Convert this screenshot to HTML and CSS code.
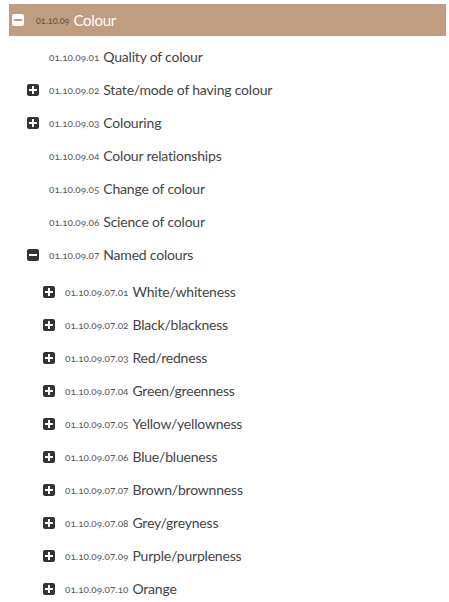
FILE: index.html
```html
<!DOCTYPE html>
<html>
<head>
<meta charset="utf-8">
<link rel="stylesheet" href="styles.css">
</head>
<body>
<div class="tree">
  <div class="head">
    <span class="tog tog-light minus"></span>
    <span class="code">01.10.09</span>
    <span class="label">Colour</span>
  </div>
  <ul class="lvl1">
    <li class="row"><span class="tog none"></span><span class="code">01.10.09.01</span><span class="label">Quality of colour</span></li>
    <li class="row"><span class="tog plus"></span><span class="code">01.10.09.02</span><span class="label">State/mode of having colour</span></li>
    <li class="row"><span class="tog plus"></span><span class="code">01.10.09.03</span><span class="label">Colouring</span></li>
    <li class="row"><span class="tog none"></span><span class="code">01.10.09.04</span><span class="label">Colour relationships</span></li>
    <li class="row"><span class="tog none"></span><span class="code">01.10.09.05</span><span class="label">Change of colour</span></li>
    <li class="row"><span class="tog none"></span><span class="code">01.10.09.06</span><span class="label">Science of colour</span></li>
    <li class="open">
      <div class="row"><span class="tog minus"></span><span class="code">01.10.09.07</span><span class="label">Named colours</span></div>
      <ul class="lvl2">
        <li class="row"><span class="tog plus"></span><span class="code">01.10.09.07.01</span><span class="label">White/whiteness</span></li>
        <li class="row"><span class="tog plus"></span><span class="code">01.10.09.07.02</span><span class="label">Black/blackness</span></li>
        <li class="row"><span class="tog plus"></span><span class="code">01.10.09.07.03</span><span class="label">Red/redness</span></li>
        <li class="row"><span class="tog plus"></span><span class="code">01.10.09.07.04</span><span class="label">Green/greenness</span></li>
        <li class="row"><span class="tog plus"></span><span class="code">01.10.09.07.05</span><span class="label">Yellow/yellowness</span></li>
        <li class="row"><span class="tog plus"></span><span class="code">01.10.09.07.06</span><span class="label">Blue/blueness</span></li>
        <li class="row"><span class="tog plus"></span><span class="code">01.10.09.07.07</span><span class="label">Brown/brownness</span></li>
        <li class="row"><span class="tog plus"></span><span class="code">01.10.09.07.08</span><span class="label">Grey/greyness</span></li>
        <li class="row"><span class="tog plus"></span><span class="code">01.10.09.07.09</span><span class="label">Purple/purpleness</span></li>
        <li class="row"><span class="tog plus"></span><span class="code">01.10.09.07.10</span><span class="label">Orange</span></li>
      </ul>
    </li>
  </ul>
</div>
</body>
</html>
```
FILE: styles.css
```css
html, body {
  margin: 0;
  padding: 0;
  background: #fff;
}
body {
  font-family: Lato, "Open Sans", sans-serif;
  color: #444;
  overflow: hidden;
}
.tree {
  margin: 4px 3px 0 9px;
}
.head {
  height: 32px;
  background: #c09d7e;
  display: flex;
  align-items: center;
  padding-left: 3px;
  color: #fff;
}
.head .code {
  color: #5e5247;
  margin-left: 12px;
  font-size: 9px;
  letter-spacing: 0;
}
.head .label {
  font-size: 15px;
  margin-left: 4px;
  color: #fff;
  letter-spacing: -0.3px;
}
ul {
  list-style: none;
  margin: 0;
  padding: 0;
}
.lvl1 {
  margin-top: 4px;
  padding-left: 18px;
}
.lvl2 {
  padding-top: 4px;
  padding-left: 16px;
}
.row {
  height: 33px;
  display: flex;
  align-items: center;
}
.tog {
  width: 12px;
  height: 12px;
  border-radius: 2px;
  background: #333;
  position: relative;
  flex: none;
}
.tog.none {
  background: transparent;
}
.tog.plus::before,
.tog.minus::before,
.tog.plus::after {
  content: "";
  position: absolute;
  background: #fff;
}
.tog.plus::before,
.tog.minus::before {
  left: 2px;
  right: 2px;
  top: 5px;
  height: 2px;
}
.tog.plus::after {
  top: 2px;
  bottom: 2px;
  left: 5px;
  width: 2px;
}
.tog-light {
  background: #fff;
}
.tog-light.minus::before {
  background: #c09d7e;
}
.code {
  font-size: 10px;
  color: #555;
  margin-left: 10px;
  font-variant-numeric: oldstyle-nums;
}
.label {
  font-size: 14px;
  margin-left: 4px;
  color: #444;
  letter-spacing: -0.2px;
}
```
